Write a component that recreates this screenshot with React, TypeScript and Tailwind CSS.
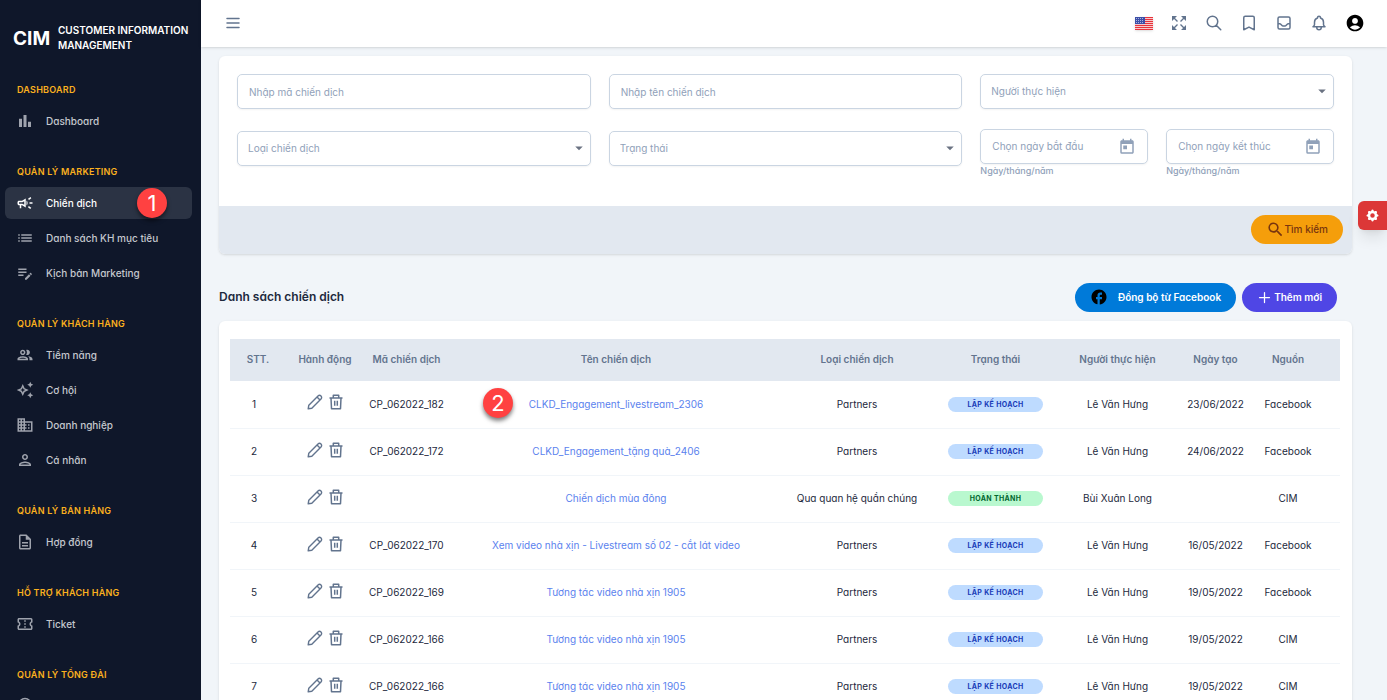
import clsx from "clsx"
import {
    MdAccountCircle,
    MdArrowDropDown,
    MdBarChart,
    MdFacebook,
    MdOutlineAutoAwesome,
    MdOutlineBusiness,
    MdOutlineCampaign,
    MdOutlineConfirmationNumber,
    MdOutlineDescription,
    MdOutlineEditNote,
    MdOutlineGroup,
    MdOutlineHeadsetMic,
    MdOutlineList,
    MdOutlinePerson,
    MdSearch,
    MdToday,
} from "react-icons/md"
import {
    HiCog,
    HiOutlineBell,
    HiOutlineBookmark,
    HiOutlineInbox,
    HiOutlineMenu,
    HiOutlinePlus,
    HiOutlineSearch,
} from "react-icons/hi"

const menu = [
    { title: "DASHBOARD", items: [{ icon: MdBarChart, label: "Dashboard" }] },
    {
        title: "QUẢN LÝ MARKETING",
        items: [
            { icon: MdOutlineCampaign, label: "Chiến dịch", active: true },
            { icon: MdOutlineList, label: "Danh sách KH mục tiêu" },
            { icon: MdOutlineEditNote, label: "Kịch bản Marketing" },
        ],
    },
    {
        title: "QUẢN LÝ KHÁCH HÀNG",
        items: [
            { icon: MdOutlineGroup, label: "Tiềm năng" },
            { icon: MdOutlineAutoAwesome, label: "Cơ hội" },
            { icon: MdOutlineBusiness, label: "Doanh nghiệp" },
            { icon: MdOutlinePerson, label: "Cá nhân" },
        ],
    },
    { title: "QUẢN LÝ BÁN HÀNG", items: [{ icon: MdOutlineDescription, label: "Hợp đồng" }] },
    { title: "HỖ TRỢ KHÁCH HÀNG", items: [{ icon: MdOutlineConfirmationNumber, label: "Ticket" }] },
    { title: "QUẢN LÝ TỔNG ĐÀI", items: [{ icon: MdOutlineHeadsetMic, label: "Cuộc gọi" }] },
]

const rows = [
    { code: "CP_062022_182", name: "CLKD_Engagement_livestream_2306", type: "Partners", owner: "Lê Văn Hưng", date: "23/06/2022", source: "Facebook" },
    { code: "CP_062022_172", name: "CLKD_Engagement_tặng quà_2406", type: "Partners", owner: "Lê Văn Hưng", date: "24/06/2022", source: "Facebook" },
    { code: "", name: "Chiến dịch mùa đông", type: "Qua quan hệ quần chúng", done: true, owner: "Bùi Xuân Long", date: "", source: "CIM" },
    { code: "CP_062022_170", name: "Xem video nhà xịn - Livestream số 02 - cắt lát video", type: "Partners", owner: "Lê Văn Hưng", date: "16/05/2022", source: "Facebook" },
    { code: "CP_062022_169", name: "Tương tác video nhà xịn 1905", type: "Partners", owner: "Lê Văn Hưng", date: "19/05/2022", source: "Facebook" },
    { code: "CP_062022_166", name: "Tương tác video nhà xịn 1905", type: "Partners", owner: "Lê Văn Hưng", date: "19/05/2022", source: "CIM" },
    { code: "CP_062022_166", name: "Tương tác video nhà xịn 1905", type: "Partners", owner: "Lê Văn Hưng", date: "19/05/2022", source: "CIM" },
]

const Marker = ({ n, className }: { n: number; className: string }) => (
    <span
        className={clsx(
            "absolute flex size-[30px] items-center justify-center rounded-full bg-[#ff4141] text-[22px] leading-none font-normal text-white shadow-[0_3px_4px_rgba(0,0,0,0.5)]",
            className,
        )}
    >
        {n}
    </span>
)

const PencilIcon = () => (
    <svg viewBox="0 0 16 16" className="size-4" fill="none" stroke="currentColor" strokeWidth="1.4" strokeLinejoin="round">
        <path d="M1.200 14.800l.6-3.600 9.200-9.200a2.100 2.100 0 0 1 3 3l-9.200 9.200-3.600.6z" />
        <path d="M10 3l3 3" />
    </svg>
)

const TrashIcon = () => (
    <svg viewBox="0 0 16 16" className="size-4" fill="none" stroke="currentColor" strokeWidth="1.500" strokeLinejoin="round">
        <path d="M1.500 4h13M5.300 4V1.300h5.400V4M3 4l.5 10.700h9L13 4M6.700 6.800v5M9.300 6.800v5" />
    </svg>
)

const ExpandIcon = () => (
    <svg viewBox="0 0 14 14" className="size-[14px]" fill="currentColor" stroke="currentColor" strokeWidth="1.400">
        <path stroke="none" d="M0 0h5L0 5zM14 0v5L9 0zM0 14V9l5 5zM14 14H9l5-5z" />
        <path d="M2 2l3.500 3.500M12 2L8.500 5.500M2 12l3.500-3.500M12 12L8.500 8.500" />
    </svg>
)

const Flag = () => (
    <svg viewBox="0 0 18 13" className="h-[13px] w-[18px] shadow-sm">
        <rect width="18" height="13" fill="#f7c9cb" />
        {[0, 2, 4, 6, 8, 10, 12].map((y) => (
            <rect key={y} y={y} width="18" height="1" fill="#e8333c" />
        ))}
        <rect width="10" height="7" fill="#3d4fa8" />
        {[1, 3, 5].map((y) =>
            [1, 3, 5, 7].map((x) => <rect key={`${x}-${y}`} x={x} y={y} width="1" height="1" fill="#a9b2de" />),
        )}
    </svg>
)

const Sidebar = () => (
    <aside className="h-full w-[201px] shrink-0 overflow-hidden bg-[#0f172a]">
        <div className="flex items-center gap-2 pt-[23px] pl-[13px] text-white">
            <span className="w-[37px] text-[19px] leading-none font-bold">CIM</span>
            <p className="text-[10px] leading-[15px] font-semibold">
                CUSTOMER INFORMATION
                <br />
                MANAGEMENT
            </p>
        </div>
        <nav className="mt-[22px]">
            {menu.map((group) => (
                <section key={group.title} className="mb-5">
                    <h2 className="flex h-[30px] items-center pl-[17px] text-[9px] font-semibold tracking-wide text-[#fbb11e]">
                        {group.title}
                    </h2>
                    {group.items.map(({ icon: Icon, label, ...item }) => {
                        const active = "active" in item
                        return (
                            <a
                                key={label}
                                href="#"
                                className={clsx(
                                    "relative mr-[9px] mb-[3px] ml-[5px] flex h-8 items-center gap-3 rounded-md pl-[11px] text-[10px] font-medium",
                                    active ? "bg-[#2b3344] text-white" : "text-[#c5c8ce]",
                                )}
                            >
                                <Icon className={clsx("size-[18px]", !active && "text-[#9fa3ad]")} />
                                {label}
                                {active && <Marker n={1} className="left-[132px]" />}
                            </a>
                        )
                    })}
                </section>
            ))}
        </nav>
    </aside>
)

const Header = () => (
    <header className="relative flex h-[47px] shrink-0 items-center justify-between bg-white pr-[22px] pb-px pl-[23px] text-slate-500 shadow">
        <button aria-label="Menu">
            <HiOutlineMenu className="size-[18px]" />
        </button>
        <div className="flex items-center gap-[17px]">
            <button aria-label="English" className="flex w-[18px] justify-center"><Flag /></button>
            <button aria-label="Fullscreen" className="flex w-[18px] justify-center"><ExpandIcon /></button>
            <button aria-label="Search"><HiOutlineSearch className="size-[18px]" /></button>
            <button aria-label="Bookmarks"><HiOutlineBookmark className="size-[18px]" /></button>
            <button aria-label="Messages"><HiOutlineInbox className="size-[18px]" /></button>
            <button aria-label="Notifications"><HiOutlineBell className="size-[18px]" /></button>
            <button aria-label="Account" className="text-black"><MdAccountCircle className="size-5" /></button>
        </div>
    </header>
)

const fieldBox = "h-[35px] w-full rounded-[5px] border border-slate-300 bg-white shadow-xs"

const TextField = ({ label }: { label: string }) => (
    <input aria-label={label} placeholder={label} className={clsx(fieldBox, "px-[11px] text-[10px] placeholder:text-slate-400")} />
)

const SelectField = ({ label }: { label: string }) => (
    <div className="relative">
        <select aria-label={label} className={clsx(fieldBox, "appearance-none px-[10px] text-[10px] text-slate-400")}>
            <option>{label}</option>
        </select>
        <MdArrowDropDown className="pointer-events-none absolute top-2 right-[3px] size-[18px] text-gray-500" />
    </div>
)

const DateField = ({ label }: { label: string }) => (
    <div className="min-w-0 flex-1">
        <div className={clsx(fieldBox, "flex items-center pr-[11px] pl-[11px]")}>
            <input aria-label={label} placeholder={label} className="min-w-0 flex-1 text-[10px] placeholder:text-slate-400" />
            <button type="button" aria-label="Lịch" className="text-slate-400"><MdToday className="size-[18px]" /></button>
        </div>
        <p className="text-[9px] leading-[14px] font-medium text-slate-400">Ngày/tháng/năm</p>
    </div>
)

const Filters = () => (
    <form className="overflow-hidden rounded-md bg-white shadow">
        <div className="grid grid-cols-3 gap-x-[18px] px-[18px] pt-[18px] pb-7">
            <TextField label="Nhập mã chiến dịch" />
            <TextField label="Nhập tên chiến dịch" />
            <SelectField label="Người thực hiện" />
            <div className="mt-[22px]"><SelectField label="Loại chiến dịch" /></div>
            <div className="mt-[22px]"><SelectField label="Trạng thái" /></div>
            <div className="mt-5 flex min-w-0 gap-[18px]">
                <DateField label="Chọn ngày bắt đầu" />
                <DateField label="Chọn ngày kết thúc" />
            </div>
        </div>
        <div className="flex justify-end bg-slate-200 px-[9px] pt-[9px] pb-[10px]">
            <button type="button" className="flex h-[29px] items-center rounded-full bg-[#f59e0b] px-[15px] text-[10px] font-medium text-[#78350f]">
                <MdSearch className="size-[19px]" />
                Tìm kiếm
            </button>
        </div>
    </form>
)

const columns = [
    { label: "STT.", width: "w-14" },
    { label: "Hành động", width: "w-[78px]" },
    { label: "Mã chiến dịch", width: "w-[85px]" },
    { label: "Tên chiến dịch", width: "" },
    { label: "Loại chiến dịch", width: "w-[148px]" },
    { label: "Trạng thái", width: "w-[129px]" },
    { label: "Người thực hiện", width: "w-[115px]" },
    { label: "Ngày tạo", width: "w-[81px]" },
    { label: "Nguồn", width: "w-[84px] pr-5" },
]

const CampaignTable = () => (
    <div className="rounded-md bg-white pt-[18px] pr-3 pl-[11px] shadow">
        <table className="w-full table-fixed text-center text-[10px] text-slate-800">
            <thead className="bg-slate-200 text-slate-500">
                <tr className="h-[42px]">
                    {columns.map((c) => (
                        <th key={c.label} className={clsx(c.width, "pb-px font-semibold whitespace-nowrap")}>{c.label}</th>
                    ))}
                </tr>
            </thead>
            <tbody>
                {rows.map((row, i) => (
                    <tr key={i} className="h-[47px] border-b border-slate-100">
                        <td className="pr-2">{i + 1}</td>
                        <td className="pb-1">
                            <div className="flex justify-center gap-[5px] text-slate-500">
                                <button aria-label="Sửa"><PencilIcon /></button>
                                <button aria-label="Xóa"><TrashIcon /></button>
                            </div>
                        </td>
                        <td>{row.code}</td>
                        <td className="relative">
                            <a href="#" className="text-[#5b82ee]">{row.name}</a>
                            {i === 0 && <Marker n={2} className="top-[7px] left-[34px]" />}
                        </td>
                        <td>{row.type}</td>
                        <td>
                            <span
                                className={clsx(
                                    "mx-auto block h-[15px] w-[95px] rounded-full text-[7px] leading-[15px] font-bold tracking-wider",
                                    row.done ? "bg-green-200 text-green-800" : "bg-blue-200 text-blue-800",
                                )}
                            >
                                {row.done ? "HOÀN THÀNH" : "LẬP KẾ HOẠCH"}
                            </span>
                        </td>
                        <td>{row.owner}</td>
                        <td>{row.date}</td>
                        <td className="pr-5">{row.source}</td>
                    </tr>
                ))}
            </tbody>
        </table>
    </div>
)

export default function App() {
    return (
        <div className="relative flex h-screen overflow-hidden bg-slate-100 font-[Inter,'Noto_Sans',sans-serif] [font-feature-settings:'cv11']">
            <Sidebar />
            <div className="flex min-w-0 flex-1 flex-col">
                <Header />
                <main className="min-h-0 flex-1 overflow-hidden pt-[9px] pr-[35px] pl-[18px]">
                    <Filters />
                    <div className="mt-7 mb-[9px] flex h-[30px] items-center justify-between pr-[15px]">
                        <h1 className="text-xs font-semibold text-slate-800">Danh sách chiến dịch</h1>
                        <div className="flex gap-[6px] text-[10px] font-semibold text-white">
                            <button className="flex h-[29px] items-center gap-[10px] rounded-full bg-[#007ad9] px-[15px]">
                                <MdFacebook className="size-[18px] text-black" />
                                Đồng bộ từ Facebook
                            </button>
                            <button className="flex h-[29px] items-center gap-[2px] rounded-full bg-[#4f46e5] px-[15px]">
                                <HiOutlinePlus className="size-[15px]" />
                                Thêm mới
                            </button>
                        </div>
                    </div>
                    <CampaignTable />
                </main>
            </div>
            <button
                aria-label="Cài đặt"
                className="absolute top-[201px] right-0 flex h-[29px] w-[29px] items-center justify-center rounded-l-md bg-[#dc3737] text-white shadow-lg"
            >
                <HiCog className="size-[15px]" />
            </button>
        </div>
    )
}
